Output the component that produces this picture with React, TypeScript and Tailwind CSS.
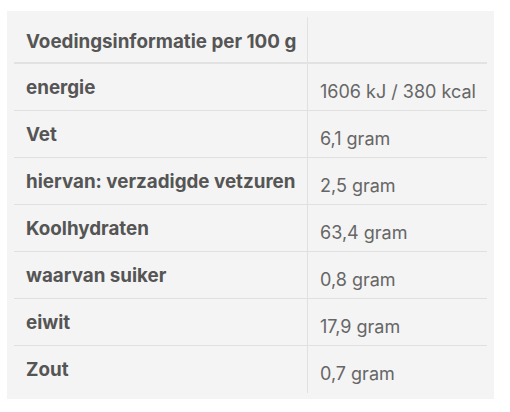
const rows: [string, string][] = [
  ["energie", "1606 kJ / 380 kcal"],
  ["Vet", "6,1 gram"],
  ["hiervan: verzadigde vetzuren", "2,5 gram"],
  ["Koolhydraten", "63,4 gram"],
  ["waarvan suiker", "0,8 gram"],
  ["eiwit", "17,9 gram"],
  ["Zout", "0,7 gram"],
];

export default function App() {
  return (
    <div className="h-[412px] w-[510px] bg-white pl-[7px] pt-[11px] font-['Inter','Liberation_Sans',sans-serif]">
      <div className="w-[487px] bg-[#f4f4f4] px-[7px] pt-[6px] pb-[6px]">
        <div className="grid grid-cols-[293px_180px]">
          <div className="h-[47px] border-b-2 border-[#e2e2e2] pl-[12px] pt-[11px] text-[18.8px] font-bold text-[#555]">
            Voedingsinformatie per 100 g
          </div>
          <div className="h-[47px] border-b-2 border-l border-[#e2e2e2]" />
          {rows.map(([label, value], i) => (
            <div key={label} className="contents">
              <div
                className={
                  "h-[47px] pl-[12px] pt-[10px] text-[18.8px] font-bold text-[#555] " +
                  (i < rows.length - 1 ? "border-b border-[#e0e0e0]" : "")
                }
              >
                {label}
              </div>
              <div
                className={
                  "h-[47px] border-l border-[#e0e0e0] pl-[12px] pt-[14px] text-[18px] text-[#666] " +
                  (i < rows.length - 1 ? "border-b" : "")
                }
              >
                {value}
              </div>
            </div>
          ))}
        </div>
      </div>
    </div>
  );
}
